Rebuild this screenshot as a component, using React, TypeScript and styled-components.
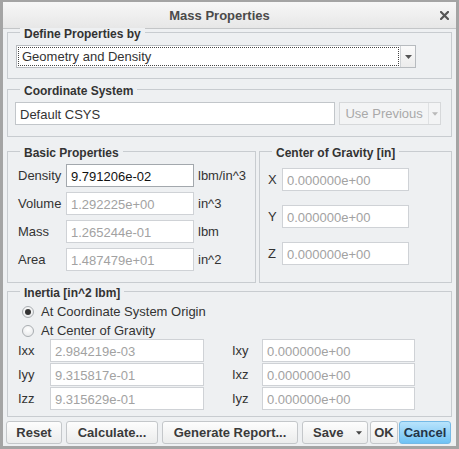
import React from 'react'
import styled, { createGlobalStyle } from 'styled-components'

const BG = '#eef0f2'

const GlobalStyle = createGlobalStyle`
  html, body {
    margin: 0;
    padding: 0;
    background: #fff;
  }
  body {
    font-family: 'Liberation Sans', Arial, sans-serif;
  }
  * {
    box-sizing: border-box;
  }
`

const Window = styled.div`
  width: 459px;
  height: 449px;
  border: 3px solid #a4a4a4;
  border-top-width: 2px;
  background: ${BG};
  display: flex;
  flex-direction: column;
  color: #333;
  font-size: 13px;
  overflow: hidden;
`

const TitleBar = styled.div`
  flex: none;
  height: 27px;
  display: flex;
  align-items: center;
  background: linear-gradient(#f7f7f7, #e7e7e7);
  border-bottom: 1px solid #c4c6c8;
`

const Title = styled.div`
  flex: 1;
  text-align: center;
  font-size: 13px;
  font-weight: bold;
  color: #4a4a4a;
`

const Close = styled.div`
  width: 20px;
  padding-right: 4px;
  display: flex;
  justify-content: center;
  align-items: center;
`

const Content = styled.div`
  flex: 1;
  display: flex;
  flex-direction: column;
  padding: 0 4px;
`

const Group = styled.div<{ $mt: number }>`
  margin-top: ${p => p.$mt}px;
  border: 1px solid #c8ccd0;
  display: flex;
  flex-direction: column;
`

const GroupTitle = styled.div`
  align-self: flex-start;
  margin: -5px 0 0 12px;
  padding: 0 4px;
  background: ${BG};
  font-size: 12px;
  line-height: 12px;
  font-weight: bold;
  color: #333;
`

const DefineBody = styled.div`
  padding: 5px 8px 10px;
`

const Select = styled.div`
  width: 400px;
  height: 23px;
  display: flex;
  background: #fff;
  border: 1px solid #b7bbbf;
`

const SelectValue = styled.div`
  flex: 1;
  margin: 1px;
  padding-left: 3px;
  border: 1px dotted #444;
  line-height: 18px;
  color: #333;
`

const SelectArrow = styled.div`
  width: 15px;
  display: flex;
  align-items: center;
  justify-content: center;
  border-left: 1px solid #cfd2d5;
  background: linear-gradient(#fafafa, #ececec);
`

const CoordBody = styled.div`
  display: flex;
  gap: 4px;
  padding: 5px 10px 11px 7px;
`

const Field = styled.input<{ $w: number; $active?: boolean }>`
  width: ${p => p.$w}px;
  height: 23px;
  margin: 0;
  padding: 1px 0 0 4px;
  background: #fff;
  border: 1px solid ${p => (p.$active ? '#a3a8ad' : '#cfd2d6')};
  border-radius: 0;
  outline: none;
  font-family: inherit;
  font-size: 13px;
  color: ${p => (p.$active ? '#111' : '#a2a2a2')};
`

const CsysField = styled(Field)`
  color: #333;
  border-color: #c2c6ca;
`

const UsePrevious = styled.div`
  width: 102px;
  height: 23px;
  display: flex;
  background: #f3f4f5;
  border: 1px solid #d6d8da;
  color: #a9a9a9;
`

const UsePreviousText = styled.div`
  flex: 1;
  padding-left: 5px;
  line-height: 22px;
`

const UsePreviousArrow = styled.div`
  width: 12px;
  display: flex;
  align-items: center;
  justify-content: center;
  border-left: 1px solid #dfe1e3;
`

const SplitRow = styled.div`
  margin-top: 14px;
  display: grid;
  grid-template-columns: 249px 193px;
  gap: 3px;
`

const SplitGroup = styled(Group)`
  margin-top: 0;
`

const BasicBody = styled.div`
  display: flex;
  flex-direction: column;
  gap: 5px;
  padding: 5px 0 11px 10px;
`

const CogBody = styled.div`
  display: flex;
  flex-direction: column;
  gap: 14px;
  padding: 9px 0 0 8px;
`

const FieldRow = styled.div`
  display: flex;
  align-items: center;
`

const FieldLabel = styled.div<{ $w: number }>`
  width: ${p => p.$w}px;
  flex: none;
  color: #333;
`

const Unit = styled.div`
  margin-left: 4px;
  white-space: nowrap;
  color: #333;
`

const InertiaBody = styled.div`
  display: flex;
  flex-direction: column;
  padding: 3px 0 6px 10px;
`

const RadioRow = styled.label`
  height: 19px;
  display: flex;
  align-items: center;
  gap: 7px;
  padding-left: 4px;
  color: #333;
`

const RadioCircle = styled.span<{ $checked?: boolean }>`
  width: 12px;
  height: 12px;
  border-radius: 50%;
  border: 1px solid #a9adb1;
  background: radial-gradient(circle at 50% 35%, #ffffff, #e3e5e7);
  display: flex;
  align-items: center;
  justify-content: center;

  &::after {
    content: '';
    width: 6px;
    height: 6px;
    border-radius: 50%;
    background: ${p => (p.$checked ? '#333' : 'transparent')};
  }
`

const InertiaGrid = styled.div`
  margin-top: -1px;
  display: grid;
  grid-template-columns: 32px 154px 28px 30px 153px;
  row-gap: 1px;
  align-items: center;
`

const InertiaLabel = styled.div`
  color: #333;
`

const Spacer = styled.div``

const ButtonBar = styled.div`
  margin: 4px -1px 0;
  display: flex;
`

const Button = styled.div<{ $w: number; $ml?: number; $primary?: boolean }>`
  width: ${p => p.$w}px;
  height: 23px;
  margin-left: ${p => p.$ml ?? 0}px;
  display: flex;
  align-items: center;
  justify-content: center;
  border: 1px solid ${p => (p.$primary ? '#74b9e6' : '#c4c7ca')};
  border-radius: 3px;
  background: ${p =>
    p.$primary ? 'linear-gradient(#b8e3fc, #6fc2f4)' : 'linear-gradient(#fdfdfd, #ebecec)'};
  font-size: 13px;
  font-weight: bold;
  color: ${p => (p.$primary ? '#233447' : '#3a3a3a')};
  white-space: nowrap;
`

const SplitButton = styled(Button)`
  justify-content: space-between;
  padding: 0 5px 0 10px;
`

const Arrow = ({ color, w = 7 }: { color: string; w?: number }) => (
  <svg width={w} height={4} viewBox="0 0 7 4">
    <path d="M0 0 L7 0 L3.5 4 Z" fill={color} />
  </svg>
)

const CloseIcon = () => (
  <svg width="9" height="9" viewBox="0 0 9 9">
    <path d="M1 1 L8 8 M8 1 L1 8" stroke="#555" strokeWidth="2.2" strokeLinecap="square" />
  </svg>
)

const basic = [
  { label: 'Density', value: '9.791206e-02', unit: 'lbm/in^3', active: true },
  { label: 'Volume', value: '1.292225e+00', unit: 'in^3' },
  { label: 'Mass', value: '1.265244e-01', unit: 'lbm' },
  { label: 'Area', value: '1.487479e+01', unit: 'in^2' },
]

const inertia = [
  ['Ixx', '2.984219e-03', 'Ixy', '0.000000e+00'],
  ['Iyy', '9.315817e-01', 'Ixz', '0.000000e+00'],
  ['Izz', '9.315629e-01', 'Iyz', '0.000000e+00'],
]

export default function App() {
  return (
    <>
      <GlobalStyle />
      <Window>
        <TitleBar>
          <Title>Mass Properties</Title>
          <Close>
            <CloseIcon />
          </Close>
        </TitleBar>
        <Content>
          <Group $mt={3}>
            <GroupTitle>Define Properties by</GroupTitle>
            <DefineBody>
              <Select>
                <SelectValue>Geometry and Density</SelectValue>
                <SelectArrow>
                  <Arrow color="#555" />
                </SelectArrow>
              </Select>
            </DefineBody>
          </Group>

          <Group $mt={10}>
            <GroupTitle>Coordinate System</GroupTitle>
            <CoordBody>
              <CsysField $w={322} readOnly defaultValue="Default CSYS" />
              <UsePrevious>
                <UsePreviousText>Use Previous</UsePreviousText>
                <UsePreviousArrow>
                  <Arrow color="#b9b9b9" w={6} />
                </UsePreviousArrow>
              </UsePrevious>
            </CoordBody>
          </Group>

          <SplitRow>
            <SplitGroup $mt={0}>
              <GroupTitle>Basic Properties</GroupTitle>
              <BasicBody>
                {basic.map(r => (
                  <FieldRow key={r.label}>
                    <FieldLabel $w={48}>{r.label}</FieldLabel>
                    <Field $w={128} $active={r.active} readOnly defaultValue={r.value} />
                    <Unit>{r.unit}</Unit>
                  </FieldRow>
                ))}
              </BasicBody>
            </SplitGroup>
            <SplitGroup $mt={0}>
              <GroupTitle>Center of Gravity [in]</GroupTitle>
              <CogBody>
                {['X', 'Y', 'Z'].map(a => (
                  <FieldRow key={a}>
                    <FieldLabel $w={14}>{a}</FieldLabel>
                    <Field $w={127} readOnly defaultValue="0.000000e+00" />
                  </FieldRow>
                ))}
              </CogBody>
            </SplitGroup>
          </SplitRow>

          <Group $mt={8}>
            <GroupTitle>Inertia [in^2 lbm]</GroupTitle>
            <InertiaBody>
              <RadioRow>
                <RadioCircle $checked />
                At Coordinate System Origin
              </RadioRow>
              <RadioRow>
                <RadioCircle />
                At Center of Gravity
              </RadioRow>
              <InertiaGrid>
                {inertia.map(([l1, v1, l2, v2]) => (
                  <React.Fragment key={l1}>
                    <InertiaLabel>{l1}</InertiaLabel>
                    <Field $w={154} readOnly defaultValue={v1} />
                    <Spacer />
                    <InertiaLabel>{l2}</InertiaLabel>
                    <Field $w={153} readOnly defaultValue={v2} />
                  </React.Fragment>
                ))}
              </InertiaGrid>
            </InertiaBody>
          </Group>

          <ButtonBar>
            <Button $w={56}>Reset</Button>
            <Button $w={92} $ml={4}>Calculate...</Button>
            <Button $w={136} $ml={4}>Generate Report...</Button>
            <SplitButton $w={66} $ml={4}>
              Save
              <Arrow color="#444" w={6} />
            </SplitButton>
            <Button $w={28} $ml={2}>OK</Button>
            <Button $w={52} $ml={1} $primary>Cancel</Button>
          </ButtonBar>
        </Content>
      </Window>
    </>
  )
}
